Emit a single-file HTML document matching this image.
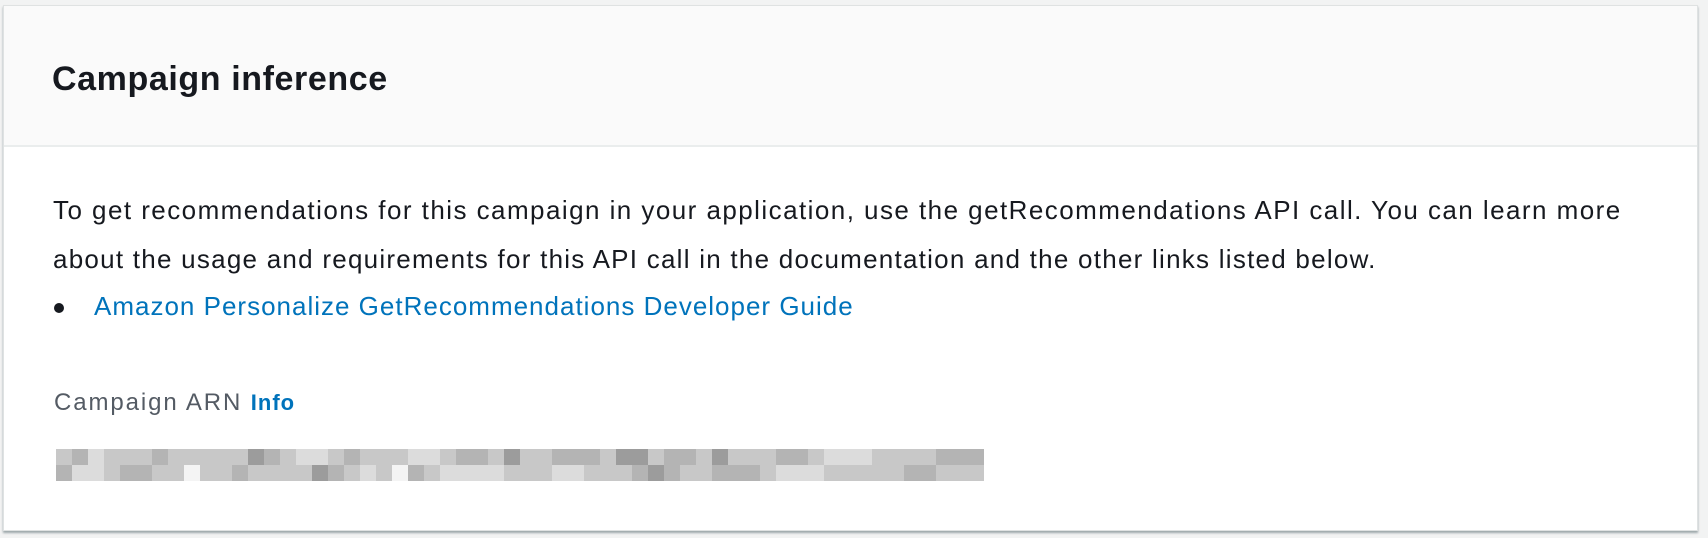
<!DOCTYPE html>
<html><head><meta charset="utf-8"><style>
html,body{margin:0;padding:0;width:1708px;height:538px;background:#f2f3f3;overflow:hidden;font-family:"Liberation Sans",sans-serif;}
.card{position:absolute;left:3px;top:5px;width:1695px;height:526px;background:#fff;border:1px solid #dfe2e2;box-shadow:0 2px 2px rgba(0,28,36,.35);box-sizing:border-box;}
.hdr{position:absolute;left:0;top:0;right:0;height:139px;background:#fafafa;border-bottom:2px solid #eaeded;}
.t{position:absolute;white-space:nowrap;}
.title{left:48px;top:54px;font-size:34px;font-weight:bold;color:#16191f;letter-spacing:0.6px;}
.p{font-size:26px;color:#16191f;left:49px;letter-spacing:1.25px;}
.link{color:#0073bb;letter-spacing:1px;}
.lbl{left:50px;top:383px;font-size:24px;color:#545b64;letter-spacing:1.9px;}
.lbl b{color:#0073bb;font-size:22px;letter-spacing:1px;}
.dot{position:absolute;left:50px;top:297px;width:10px;height:10px;border-radius:50%;background:#16191f;}
</style></head><body>
<div class="card">
<div class="hdr"></div>
<div class="t title">Campaign inference</div>
<div class="t p" style="top:189px;letter-spacing:1.45px">To get recommendations for this campaign in your application, use the getRecommendations API call. You can learn more</div>
<div class="t p" style="top:238px">about the usage and requirements for this API call in the documentation and the other links listed below.</div>
<div class="dot"></div>
<div class="t p link" style="left:90px;top:285px">Amazon Personalize GetRecommendations Developer Guide</div>
<div class="t lbl">Campaign ARN <b>Info</b></div>
<svg style="position:absolute;left:52px;top:443px" width="928" height="32">
<rect width="928" height="32" fill="#c8c8c8"/>
<g fill="#b4b4b4"><rect x="16" y="0" width="16" height="16"/><rect x="96" y="0" width="16" height="16"/><rect x="192" y="0" width="32" height="16"/><rect x="288" y="0" width="16" height="16"/><rect x="400" y="0" width="32" height="16"/><rect x="496" y="0" width="48" height="16"/><rect x="608" y="0" width="32" height="16"/><rect x="720" y="0" width="32" height="16"/><rect x="880" y="0" width="48" height="16"/>
<rect x="0" y="16" width="16" height="16"/><rect x="64" y="16" width="32" height="16"/><rect x="176" y="16" width="16" height="16"/><rect x="256" y="16" width="32" height="16"/><rect x="352" y="16" width="16" height="16"/><rect x="576" y="16" width="48" height="16"/><rect x="656" y="16" width="48" height="16"/><rect x="848" y="16" width="32" height="16"/></g>
<g fill="#9c9c9c"><rect x="192" y="0" width="16" height="16"/><rect x="448" y="0" width="16" height="16"/><rect x="560" y="0" width="32" height="16"/><rect x="656" y="0" width="16" height="16"/><rect x="256" y="16" width="16" height="16"/><rect x="592" y="16" width="16" height="16"/></g>
<g fill="#dcdcdc"><rect x="32" y="0" width="16" height="16"/><rect x="240" y="0" width="32" height="16"/><rect x="352" y="0" width="32" height="16"/><rect x="768" y="0" width="48" height="16"/><rect x="16" y="16" width="32" height="16"/><rect x="128" y="16" width="16" height="16"/><rect x="304" y="16" width="16" height="16"/><rect x="384" y="16" width="64" height="16"/><rect x="496" y="16" width="32" height="16"/><rect x="720" y="16" width="48" height="16"/></g>
<g fill="#f4f4f4"><rect x="128" y="16" width="16" height="16"/><rect x="336" y="16" width="16" height="16"/></g>
</svg>
</div>
</body></html>
